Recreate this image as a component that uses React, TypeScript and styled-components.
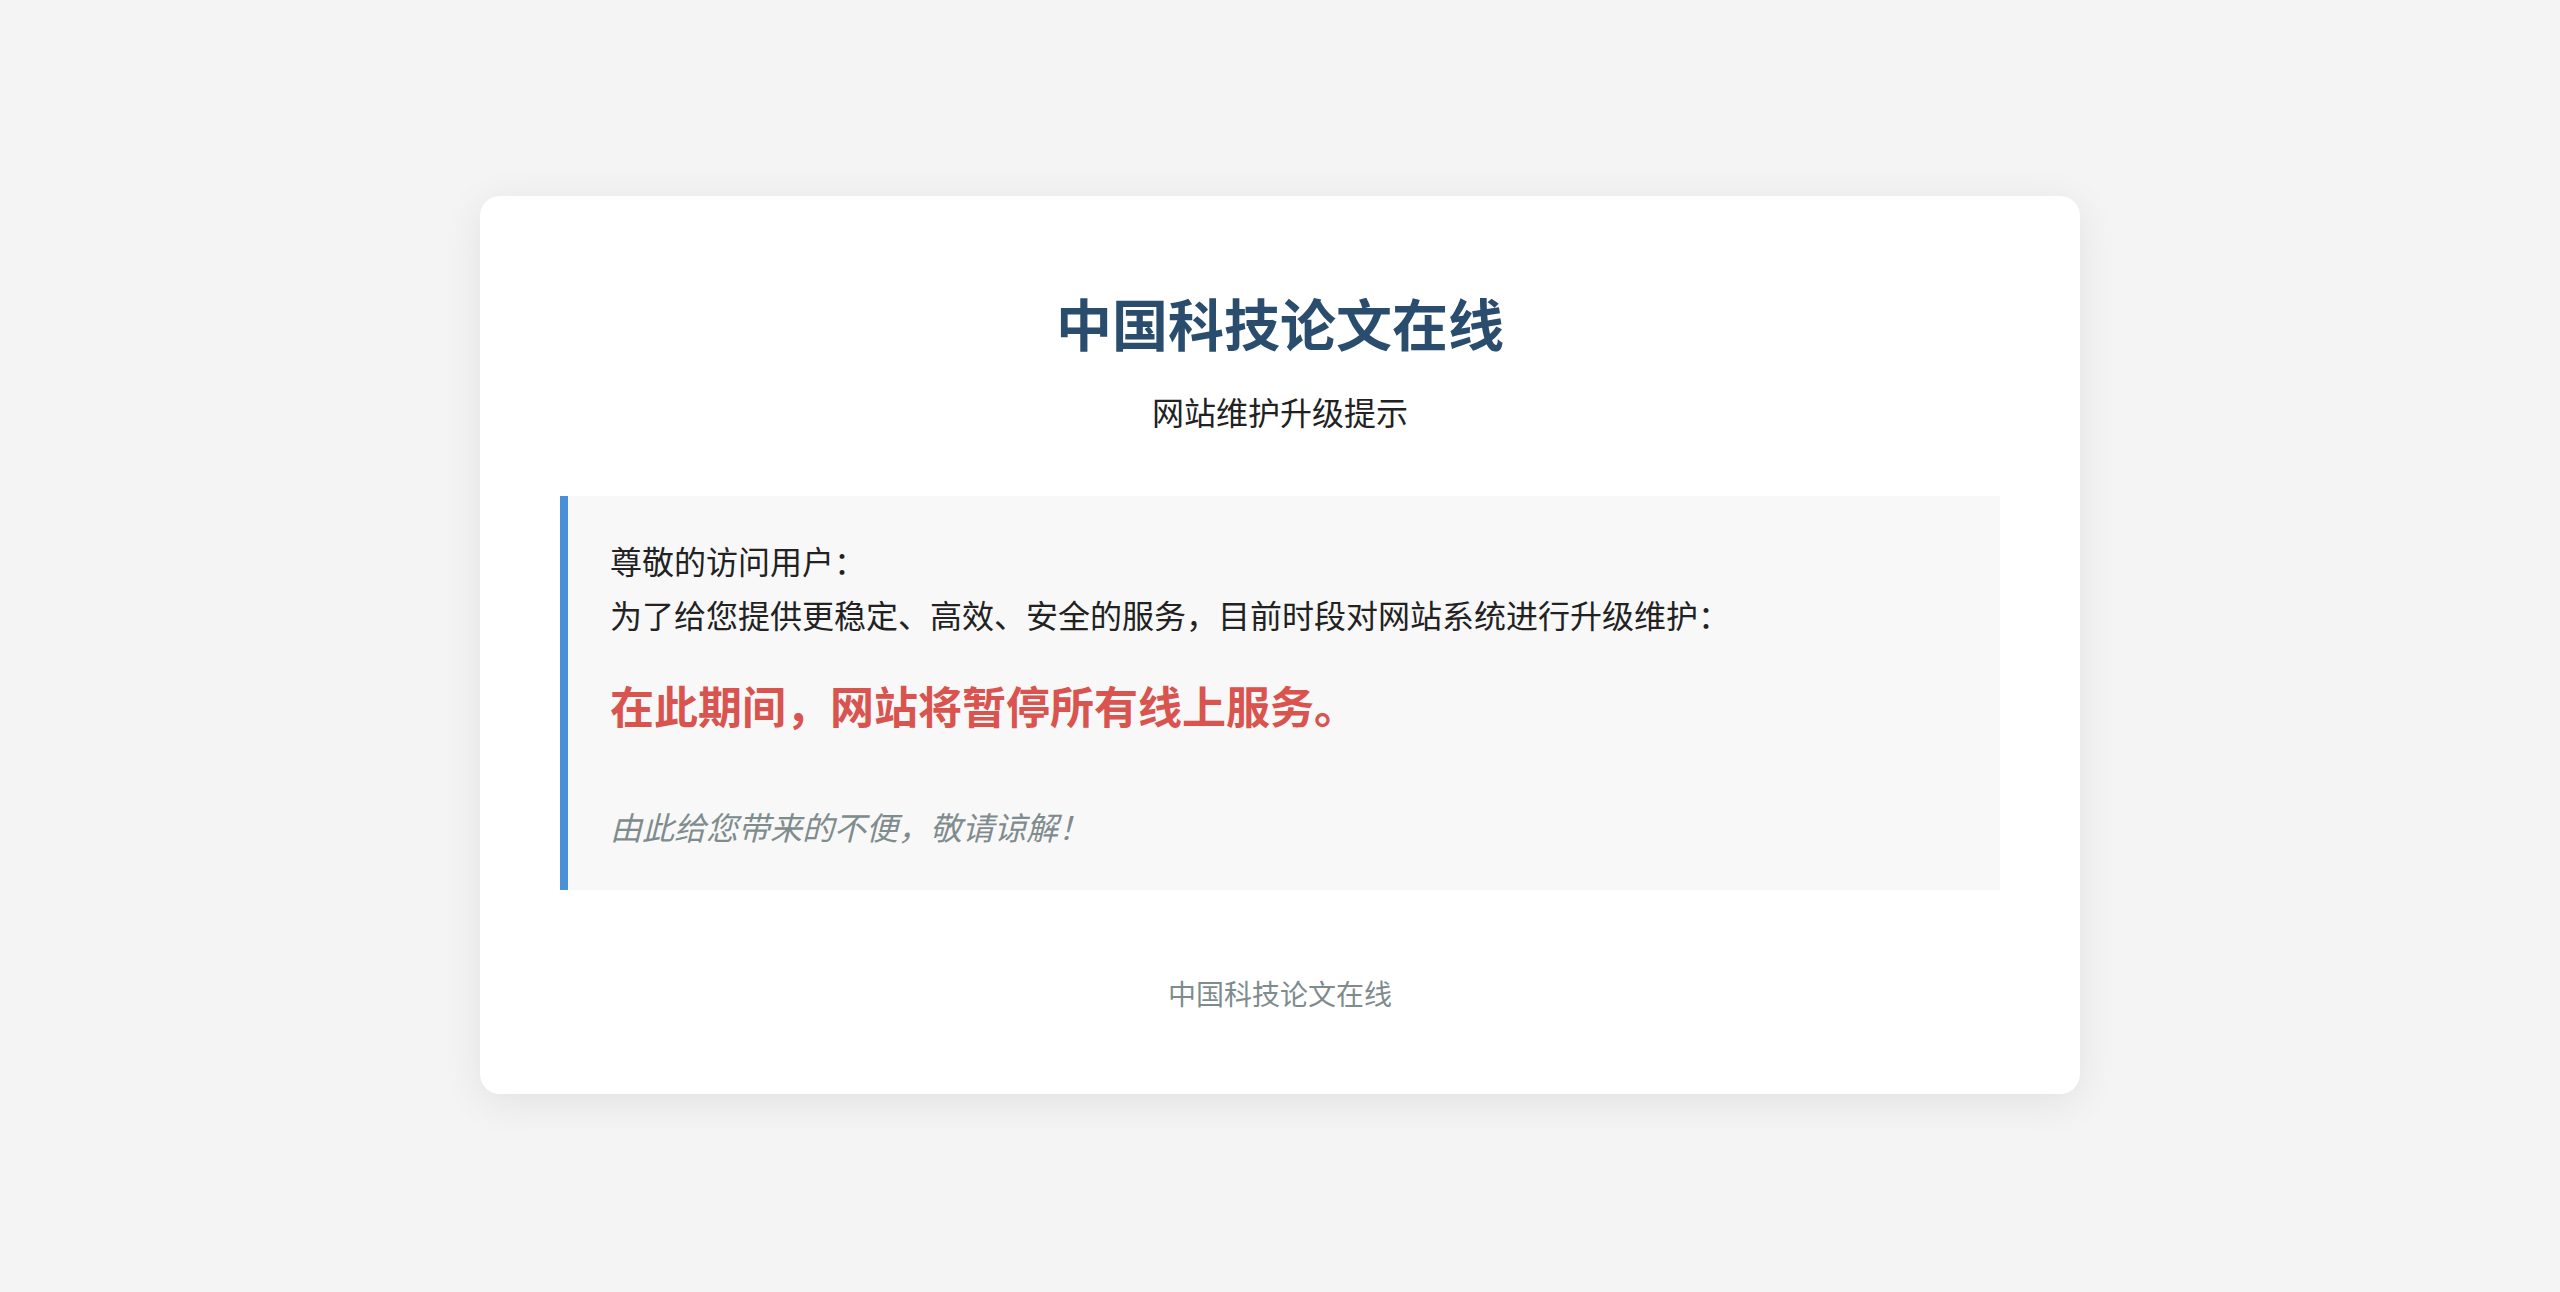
import styled, { createGlobalStyle } from "styled-components"

const GlobalStyle = createGlobalStyle`
body {
    margin: 0;
    background: #f4f4f4;
    font-family: "Noto Sans CJK SC", "Noto Sans", sans-serif;
    color: #222;
}
`

const Page = styled.div`
display: flex;
justify-content: center;
padding: 196px 0 198px;
`

const Card = styled.div`
width: 1600px;
box-sizing: border-box;
background: #fff;
border-radius: 20px;
box-shadow: 0 8px 40px rgba(0, 0, 0, 0.08);
padding: 92px 80px 80px;
display: flex;
flex-direction: column;
`

const Title = styled.h1`
margin: 0;
text-align: center;
font-size: 56px;
line-height: 67px;
font-weight: 700;
color: #2a4d6e;
`

const Subtitle = styled.div`
margin-top: 29px;
text-align: center;
font-size: 32px;
line-height: 54px;
color: #222;
`

const Notice = styled.div`
margin-top: 58px;
background: #f8f8f8;
border-left: 8px solid #4a90d9;
padding: 37px 40px 37px 42px;
`

const Line = styled.p`
margin: 0;
font-size: 32px;
line-height: 54px;
color: #222;
`

const Alert = styled.p`
margin: 31px 0 0;
font-size: 44px;
line-height: 66px;
font-weight: 700;
color: #d9534f;
`

const Apology = styled.p`
margin: 61px 0 0;
font-size: 32px;
line-height: 54px;
font-style: italic;
color: #7f8c8d;
`

const Footer = styled.div`
margin-top: 82px;
text-align: center;
font-size: 28px;
line-height: 42px;
color: #7f8c8d;
`

export default function App() {
    return (
        <>
            <GlobalStyle />
            <Page>
                <Card>
                    <Title>中国科技论文在线</Title>
                    <Subtitle>网站维护升级提示</Subtitle>
                    <Notice>
                        <Line>尊敬的访问用户：</Line>
                        <Line>为了给您提供更稳定、高效、安全的服务，目前时段对网站系统进行升级维护：</Line>
                        <Alert>在此期间，网站将暂停所有线上服务。</Alert>
                        <Apology>由此给您带来的不便，敬请谅解！</Apology>
                    </Notice>
                    <Footer>中国科技论文在线</Footer>
                </Card>
            </Page>
        </>
    )
}
